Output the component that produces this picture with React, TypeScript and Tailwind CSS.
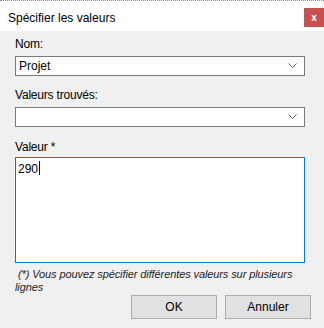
import React from 'react';

const font = { fontFamily: '"Liberation Sans", Arial, sans-serif' };

function ComboBox({ value }: { value: string }) {
  return (
    <div className='flex h-[20px] items-center justify-between border border-[#7a7a7a] bg-white pl-[3px] pr-[6px] text-[12px] text-black'>
      <span>{value}</span>
      <svg width='9' height='6' viewBox='0 0 9 6' className='mr-[1px]'>
        <path d='M0.5 0.5 L4.5 4.5 L8.5 0.5' fill='none' stroke='#606060' strokeWidth='1' />
      </svg>
    </div>
  );
}

export default function App() {
  return (
    <div className='flex h-[328px] w-[324px] flex-col overflow-hidden bg-[#f0f0f0]' style={font}>
      {/* title bar */}
      <div className='flex h-[31px] items-start justify-between border-t border-dotted border-[#8a8a8a] bg-white'>
        <span className='mt-[8px] pl-[8px] text-[12px] text-black'>Spécifier les valeurs</span>
        <div className='mt-[7px] flex h-[19px] w-[20px] items-center justify-center bg-[#c75050] text-[10px] font-bold leading-none text-white'>
          x
        </div>
      </div>

      {/* body */}
      <div className='flex flex-col px-[15px] pr-[19px] pt-[6px]'>
        <label className='text-[12px] leading-[15px] tracking-[-0.2px] text-black'>Nom:</label>
        <div className='mt-[4px]'>
          <ComboBox value='Projet' />
        </div>

        <label className='mt-[12px] text-[12px] leading-[15px] tracking-[-0.2px] text-black'>Valeurs trouvés:</label>
        <div className='mt-[4px]'>
          <ComboBox value='' />
        </div>

        <label className='mt-[13px] text-[12px] leading-[15px] tracking-[-0.2px] text-black'>Valeur *</label>
        <div className='mt-[2px] h-[106px] border border-[#0078d7] bg-white px-[2px] pt-[1px] text-[12px] leading-[15px] text-black'>
          290<span className='ml-[1px] inline-block h-[14px] w-[1px] translate-y-[2px] bg-black' />
        </div>

        <p className='mt-[5px] mr-[-4px] text-[11px] italic leading-[13px] tracking-[-0.1px] text-[#1e1e1e]'>
          &nbsp;(*) Vous pouvez spécifier différentes valeurs sur plusieurs lignes
        </p>

        <div className='mt-[1px] mr-[-6px] flex justify-end gap-[8px]'>
          <button className='h-[24px] w-[86px] border border-[#adadad] bg-[#e1e1e1] text-[12px] text-black'>OK</button>
          <button className='h-[24px] w-[86px] border border-[#adadad] bg-[#e1e1e1] text-[12px] text-black'>Annuler</button>
        </div>
      </div>
    </div>
  );
}
